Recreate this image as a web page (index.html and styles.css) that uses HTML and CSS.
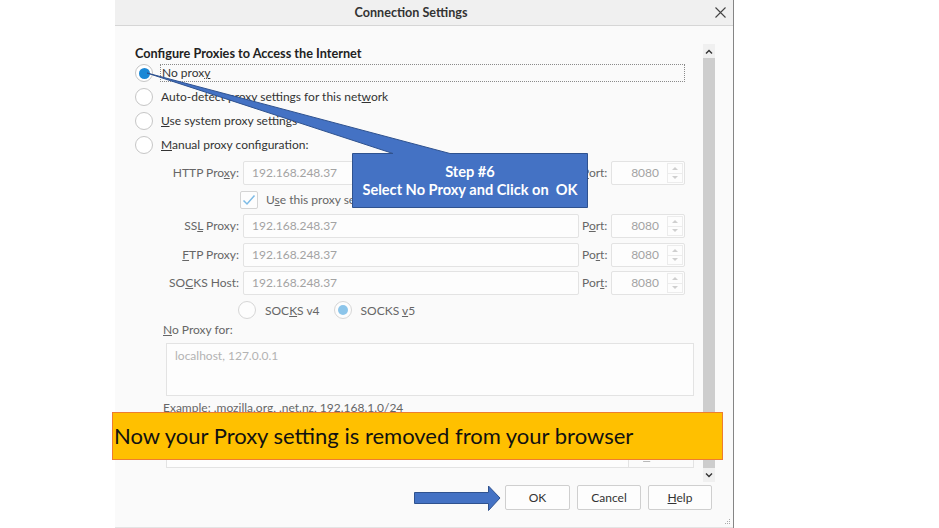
FILE: index.html
```html
<!DOCTYPE html>
<html>
<head>
<meta charset="utf-8">
<link rel="stylesheet" href="styles.css">
</head>
<body>
<div class="page">
  <div class="dialog">
    <div class="titlebar">
      <span class="title">Connection Settings</span>
      <span class="close"><svg width="11" height="11" viewBox="0 0 11 11"><path d="M0.5 0.5 L10.5 10.5 M10.5 0.5 L0.5 10.5" stroke="#444" stroke-width="1.1" fill="none"/></svg></span>
    </div>
    <div class="main">
      <div class="pane">
        <div class="heading">Configure Proxies to Access the Internet</div>
        <div class="opt"><span class="radio on"></span><span class="lbl focus">No prox<u>y</u></span></div>
        <div class="opt"><span class="radio"></span><span class="lbl">Auto-detect proxy settings for this net<u>w</u>ork</span></div>
        <div class="opt"><span class="radio"></span><span class="lbl"><u>U</u>se system proxy settings</span></div>
        <div class="opt"><span class="radio"></span><span class="lbl"><u>M</u>anual proxy configuration:</span></div>

        <div class="grid">
          <span class="flabel">HTTP Pro<u>x</u>y:</span>
          <div class="field">192.168.248.37</div>
          <span class="plabel"><u>P</u>ort:</span>
          <div class="port"><span>8080</span><span class="spin"><i class="up"></i><i class="down"></i></span></div>

          <div class="chkrow">
            <span class="check"><svg width="14" height="12" viewBox="0 0 14 12"><path d="M1.5 6.5 L5 10 L12.5 1.5" stroke="#7dbbe6" stroke-width="1.5" fill="none"/></svg></span>
            <span class="dim">U<u>s</u>e this proxy server for all protocols</span>
          </div>

          <span class="flabel">SS<u>L</u> Proxy:</span>
          <div class="field">192.168.248.37</div>
          <span class="plabel">P<u>o</u>rt:</span>
          <div class="port"><span>8080</span><span class="spin"><i class="up"></i><i class="down"></i></span></div>

          <span class="flabel"><u>F</u>TP Proxy:</span>
          <div class="field">192.168.248.37</div>
          <span class="plabel">Po<u>r</u>t:</span>
          <div class="port"><span>8080</span><span class="spin"><i class="up"></i><i class="down"></i></span></div>

          <span class="flabel">SO<u>C</u>KS Host:</span>
          <div class="field">192.168.248.37</div>
          <span class="plabel">Por<u>t</u>:</span>
          <div class="port"><span>8080</span><span class="spin"><i class="up"></i><i class="down"></i></span></div>

          <div class="socksrow">
            <span class="radio small"></span><span class="dim">SOC<u>K</u>S v4</span>
            <span class="radio small on2"></span><span class="dim">SOCKS <u>v</u>5</span>
          </div>
        </div>

        <div class="noproxy dim"><u>N</u>o Proxy for:</div>
        <div class="textarea">localhost, 127.0.0.1</div>
        <div class="example">Example: .mozilla.org, .net.nz, 192.168.1.0/24</div>
        <div class="opt hiddenrow"><span class="radio"></span></div>
        <div class="urlrow">
          <div class="url"></div>
          <div class="reload"><u>R</u>eload</div>
        </div>
      </div>
      <div class="scrollbar">
        <div class="sarrow"><svg width="8" height="5" viewBox="0 0 8 5"><path d="M1 4.5 L4 1.5 L7 4.5" stroke="#333" stroke-width="1.4" fill="none"/></svg></div>
        <div class="thumb"></div>
        <div class="sarrow"><svg width="8" height="5" viewBox="0 0 8 5"><path d="M1 0.5 L4 3.5 L7 0.5" stroke="#333" stroke-width="1.4" fill="none"/></svg></div>
      </div>
    </div>
    <div class="footer">
      <button class="btn ok">OK</button>
      <button class="btn">Cancel</button>
      <button class="btn"><u>H</u>elp</button>
      <svg class="grip" width="6" height="6" viewBox="0 0 6 6"><rect x="4" y="0" width="1" height="1" fill="#aaa"/><rect x="2" y="2" width="1" height="1" fill="#aaa"/><rect x="4" y="2" width="1" height="1" fill="#aaa"/><rect x="0" y="4" width="1" height="1" fill="#aaa"/><rect x="2" y="4" width="1" height="1" fill="#aaa"/><rect x="4" y="4" width="1" height="1" fill="#aaa"/></svg>
    </div>
  </div>

  <svg class="callout-shape" width="939" height="528" viewBox="0 0 939 528">
    <path d="M352.5 153.5 L393 153.5 L147 73 L450 153.5 L587.5 153.5 L587.5 207.5 L352.5 207.5 Z" fill="#4472c4" stroke="#2f528f" stroke-width="1"/>
    <path d="M414.5 492.5 L488.5 492.5 L488.5 486 L500 498 L488.5 510.5 L488.5 503.5 L414.5 503.5 Z" fill="#4472c4" stroke="#2f528f" stroke-width="1"/>
  </svg>
  <div class="callout-text">
    <span>Step #6</span>
    <span>Select No Proxy and Click on&nbsp; OK</span>
  </div>
  <div class="banner">Now your Proxy setting is removed from your browser</div>
</div>
</body>
</html>
```

FILE: styles.css
```css
* { box-sizing: border-box; }
html, body { margin: 0; padding: 0; background: #fff; }
body { font-family: "Lato", "Noto Sans", sans-serif; font-size: 12px; color: #333; }

.page { position: relative; width: 939px; height: 528px; overflow: hidden; background: #fff; }

.dialog {
  margin-left: 115px;
  width: 619px;
  height: 528px;
  background: #fafafa;
  border-right: 1px solid #858585;
  display: flex;
  flex-direction: column;
}

.titlebar {
  height: 26px;
  flex: none;
  background: #f0f0f0;
  border-bottom: 1px solid #d6d6d6;
  display: flex;
  align-items: center;
}
.title { flex: 1; text-align: center; font-weight: bold; font-size: 12.6px; color: #333; }
.close { width: 26px; display: flex; justify-content: center; align-items: center; }

.main { height: 456px; flex: none; display: flex; }
.pane { flex: 1; padding: 19px 0 0 20px; overflow: hidden; }

.heading { font-weight: bold; font-size: 12.7px; line-height: 16px; color: #222; }

.opt { height: 24px; display: flex; align-items: center; }
.radio {
  width: 18px; height: 18px; flex: none;
  border: 1px solid #c6c6c6; border-radius: 50%;
  background: #fff;
  display: flex; align-items: center; justify-content: center;
}
.radio.on::after { content: ""; width: 11px; height: 11px; border-radius: 50%; background: #1a88d6; }
.lbl { margin-left: 7px; padding-left: 1px; line-height: 16px; color: #333; }
.lbl.focus { width: 525px; height: 18px; border: 1px dotted #8a8a8a; line-height: 16px; }

.grid {
  margin: 4px 0 0 25px;
  display: grid;
  grid-template-columns: 79px 336px 24px 74px;
  grid-template-rows: 24px 29px 29px 28px 27px 24px;
  column-gap: 4px;
  align-items: start;
}
.flabel, .plabel { height: 24px; line-height: 24px; color: #666; white-space: nowrap; }
.flabel { text-align: right; }
.plabel { margin-left: -1px; }
.field {
  height: 24px; line-height: 22px;
  border: 1px solid #e3e3e3; border-radius: 2px; background: #fdfdfd;
  padding-left: 8px; color: #a3a3a3;
}
.port {
  height: 24px;
  border: 1px solid #e3e3e3; border-radius: 2px; background: #fdfdfd;
  display: flex; justify-content: flex-end; align-items: center;
  padding-right: 1px; color: #a3a3a3;
}
.port > span:first-child { line-height: 22px; }
.spin {
  width: 16px; height: 20px; margin-left: 8px;
  border: 1px solid #ececec;
  display: flex; flex-direction: column;
}
.spin i { flex: 1; display: flex; align-items: center; justify-content: center; }
.spin i.up { border-bottom: 1px solid #ececec; }
.spin i.up::after { content: ""; border: 3px solid transparent; border-bottom: 3px solid #cfcfcf; border-top: 0; }
.spin i.down::after { content: ""; border: 3px solid transparent; border-top: 3px solid #cfcfcf; border-bottom: 0; }

.chkrow { grid-column: 2 / 5; height: 29px; display: flex; align-items: center; margin-left: -3px; }
.check {
  width: 18px; height: 18px; border: 1px solid #d4d4d4; border-radius: 2px; background: #fdfdfd;
  display: flex; align-items: center; justify-content: center;
}
.chkrow .dim { margin-left: 8px; }
.dim { color: #666; }

.socksrow { grid-column: 2 / 5; height: 24px; display: flex; align-items: center; margin-left: -5px; }
.radio.small { border-color: #d6d6d6; background: #fdfdfd; }
.socksrow .dim { margin-left: 9px; }
.socksrow .radio + .dim + .radio { margin-left: 14px; }
.radio.on2::after { content: ""; width: 10px; height: 10px; border-radius: 50%; background: #8cc5ea; }

.noproxy { margin: 0 0 0 28px; line-height: 16px; }
.textarea {
  margin: 5px 0 0 31px; width: 528px; height: 53px;
  border: 1px solid #e3e3e3; background: #fdfdfd;
  padding: 4px 0 0 8px; color: #b3b3b3; line-height: 16px;
}
.example { margin: 4px 0 2px 28px; line-height: 16px; color: #666; }
.urlrow { margin: 2px 0 0 31px; width: 528px; height: 24px; display: flex; }
.url { flex: 1; border: 1px solid #e3e3e3; background: #fdfdfd; }
.reload {
  width: 65px; border: 1px solid #e3e3e3; border-left: none; background: #fbfbfb;
  color: #b8b8b8; text-align: center; line-height: 22px;
}

.scrollbar {
  width: 12px; margin: 18px 18px 0 0; height: 438px;
  background: #f0f0f0; display: flex; flex-direction: column;
}
.sarrow { height: 14px; display: flex; align-items: center; justify-content: center; }
.thumb { flex: 1; background: #cdcdcd; }

.footer {
  height: 46px; flex: none; position: relative;
  display: flex; justify-content: flex-end; gap: 7px;
  padding: 3px 21px 0 0;
  border-bottom: 1px solid #e4e4e4;
}
.btn {
  width: 64px; height: 25px;
  font-family: inherit; font-size: 12px; color: #333;
  background: #fdfdfd; border: 1px solid #cfcfcf; border-radius: 2px; padding: 0;
}
.btn.ok { width: 65px; }
.grip { position: absolute; right: 2px; bottom: 2px; }

.callout-shape { position: absolute; left: 0; top: 0; pointer-events: none; }
.callout-text {
  position: absolute; left: 352px; top: 153px; width: 236px; height: 55px;
  display: flex; flex-direction: column; align-items: center; justify-content: center;
  color: #fff; font-family: "Lato", sans-serif; font-weight: bold; font-size: 14.6px; line-height: 18px;
}
.banner {
  position: absolute; left: 112px; top: 412px; width: 611px; height: 48px;
  background: #ffc000; border: 1px solid #ed7d31;
  font-family: "Lato", sans-serif; font-size: 22px; color: #111;
  line-height: 46px; padding-left: 1px;
}
```
